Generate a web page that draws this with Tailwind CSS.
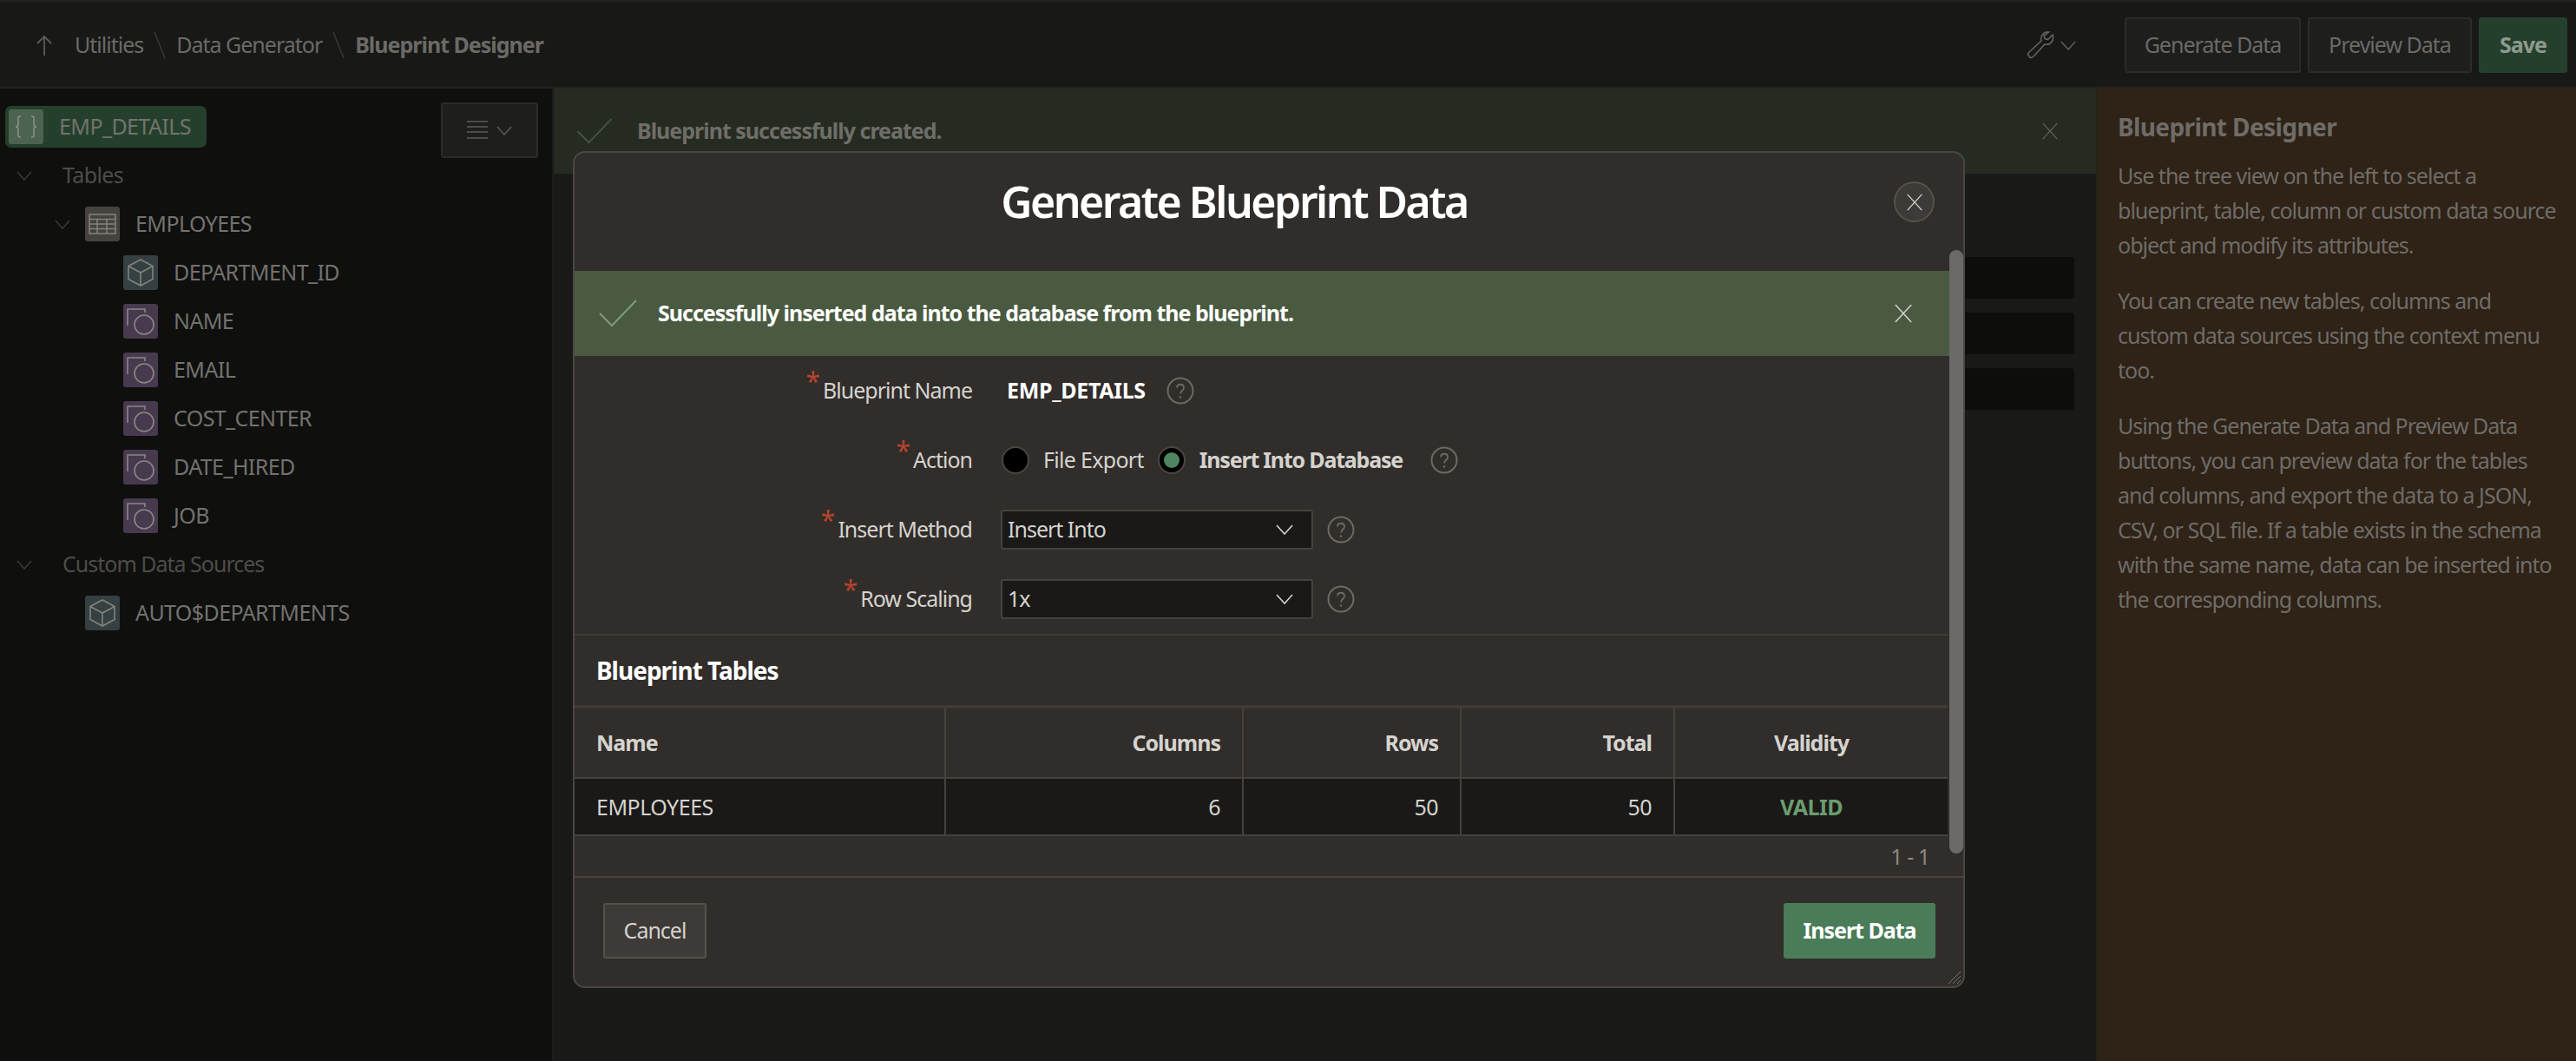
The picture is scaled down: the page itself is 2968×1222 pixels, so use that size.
<!DOCTYPE html>
<html lang="en">
<head>
<meta charset="UTF-8">
<title>Blueprint Designer</title>
<script src="https://cdn.jsdelivr.net/npm/@tailwindcss/browser@4"></script>
</head>
<body class="w-[2968px] h-[1222px] overflow-hidden bg-[#151514] font-['Noto_Sans',sans-serif] text-[25px] tracking-[-1px]">

<!-- shared icons -->
<svg class="hidden">
  <symbol id="chev" viewBox="0 0 20 12"><path d="M1 1l9 10 9-10" fill="none" stroke="currentColor" stroke-width="1.6"/></symbol>
  <symbol id="close" viewBox="0 0 24 24"><path d="M2 1l20 22M22 1L2 23" fill="none" stroke="currentColor" stroke-width="1.6"/></symbol>
  <symbol id="check" viewBox="0 0 44 32"><path d="M1 16l14 14L43 1" fill="none" stroke="currentColor" stroke-width="2"/></symbol>
  <symbol id="cube" viewBox="0 0 40 40"><path d="M20 5l14 7.500v15L20 35 6 27.500v-15zM6 12.500L20 20l14-7.500M20 20v15" fill="none" stroke="#83827d" stroke-width="1.6"/></symbol>
  <symbol id="shape" viewBox="0 0 40 40"><path d="M5 25V6h20v4" fill="none" stroke="#8a8884" stroke-width="1.6"/><circle cx="24" cy="24" r="11" fill="none" stroke="#8a8884" stroke-width="1.6"/></symbol>
  <symbol id="help" viewBox="0 0 32 32"><circle cx="16" cy="16" r="14.500" fill="none" stroke="#6d6a66" stroke-width="2"/><path d="M12 12.500c0-5 8-5 8 0 0 3.500-4 3.500-4 7" fill="none" stroke="#6d6a66" stroke-width="1.800"/><circle cx="16" cy="23.500" r="1.200" fill="#6d6a66"/></symbol>
</svg>

<!-- top bar -->
<header class="h-[102px] flex items-center bg-[#181817] border-t-2 border-b-2 border-[#222221] pt-[2px] pl-[42px] pr-[10px] text-[#6b6a66]">
  <svg class="w-[18px] h-[24px] mr-[26px] text-[#5c5b57]" viewBox="0 0 18 24"><path d="M9 24V2M1 10l8-8 8 8" fill="none" stroke="currentColor" stroke-width="1.800"/></svg>
  <nav class="flex items-center">
    <span>Utilities</span>
    <svg class="w-[14px] h-[32px] mx-[12px]" viewBox="0 0 14 32"><path d="M1 1l12 30" stroke="#3a3937" stroke-width="1.500"/></svg>
    <span>Data Generator</span>
    <svg class="w-[14px] h-[32px] mx-[12px]" viewBox="0 0 14 32"><path d="M1 1l12 30" stroke="#3a3937" stroke-width="1.500"/></svg>
    <span class="font-bold">Blueprint Designer</span>
  </nav>
  <div class="ml-auto flex items-center text-[#63625e]">
    <svg class="w-[32px] h-[32px]" viewBox="0 0 32 32"><path d="M30 4l-5.500 5.500-3.500-1-1-3.500L25.500 1C20 0 15.500 4.500 17 11L2.500 24.500c-2.500 3 2 7.500 5 5L21 15c6 1.500 11-3.500 9-11z" fill="none" stroke="currentColor" stroke-width="1.600"/></svg>
    <svg class="w-[18px] h-[11px] ml-[7px] mr-[56px]"><use href="#chev"/></svg>
  </div>
  <div class="flex gap-[8px]">
    <button class="h-[64px] w-[203px] rounded-[3px] border-2 border-[#2b2b2a] bg-[#1e1e1d]">Generate Data</button>
    <button class="h-[64px] w-[189px] rounded-[3px] border-2 border-[#2b2b2a] bg-[#1e1e1d]">Preview Data</button>
    <button class="h-[64px] w-[102px] rounded-[3px] bg-[#24402c] font-bold text-[#8d9a8e]">Save</button>
  </div>
</header>

<div class="relative flex h-[1120px]">
  <!-- tree -->
  <aside class="w-[638px] shrink-0 flex items-start pt-[16px] pl-[6px] bg-[#0f0f0e] border-r-2 border-[#1b1b1a] text-[#73726e]">
    <ul class="flex-1 tracking-[-0.6px]">
      <li class="h-[56px] flex items-center">
        <div class="h-[48px] w-[232px] rounded-[7px] bg-[#24402c] flex items-center pl-[4px]">
          <span class="w-[40px] h-[40px] rounded-[3px] bg-[#4c6350] flex items-center justify-center">
            <svg class="w-[28px] h-[26px]" viewBox="0 0 28 26"><path d="M8 1C4 1 5 3 5 6v4c0 2-1 3-3 3 2 0 3 1 3 3v4c0 3-1 5 3 5M20 1c4 0 3 2 3 5v4c0 2 1 3 3 3-2 0-3 1-3 3v4c0 3 1 5-3 5" fill="none" stroke="#8a948a" stroke-width="1.500"/></svg>
          </span>
          <span class="ml-[18px]">EMP_DETAILS</span>
        </div>
      </li>
      <li class="h-[56px] flex items-center pl-[13px] text-[#4d4c49]">
        <svg class="w-[18px] h-[11px] text-[#3c3b39]"><use href="#chev"/></svg>
        <span class="ml-[35px]">Tables</span>
      </li>
      <li class="h-[56px] flex items-center pl-[57px]">
        <svg class="w-[18px] h-[11px] text-[#3c3b39]"><use href="#chev"/></svg>
        <span class="ml-[17px] w-[40px] h-[40px] rounded-[3px] bg-[#45423f] flex items-center justify-center">
          <svg class="w-[32px] h-[24px]" viewBox="0 0 32 24"><path d="M1 1h30v22H1zM1 6.500h30M1 12h30M1 17.500h30M10 6.500V23M21 6.500V23" fill="none" stroke="#83827d" stroke-width="1.500"/></svg>
        </span>
        <span class="ml-[18px]">EMPLOYEES</span>
      </li>
      <li class="h-[56px] flex items-center pl-[136px]">
        <span class="w-[40px] h-[40px] rounded-[3px] bg-[#344042]"><svg class="w-[40px] h-[40px]"><use href="#cube"/></svg></span>
        <span class="ml-[18px]">DEPARTMENT_ID</span>
      </li>
      <li class="h-[56px] flex items-center pl-[136px]">
        <span class="w-[40px] h-[40px] rounded-[3px] bg-[#473a4f]"><svg class="w-[40px] h-[40px]"><use href="#shape"/></svg></span>
        <span class="ml-[18px]">NAME</span>
      </li>
      <li class="h-[56px] flex items-center pl-[136px]">
        <span class="w-[40px] h-[40px] rounded-[3px] bg-[#473a4f]"><svg class="w-[40px] h-[40px]"><use href="#shape"/></svg></span>
        <span class="ml-[18px]">EMAIL</span>
      </li>
      <li class="h-[56px] flex items-center pl-[136px]">
        <span class="w-[40px] h-[40px] rounded-[3px] bg-[#473a4f]"><svg class="w-[40px] h-[40px]"><use href="#shape"/></svg></span>
        <span class="ml-[18px]">COST_CENTER</span>
      </li>
      <li class="h-[56px] flex items-center pl-[136px]">
        <span class="w-[40px] h-[40px] rounded-[3px] bg-[#473a4f]"><svg class="w-[40px] h-[40px]"><use href="#shape"/></svg></span>
        <span class="ml-[18px]">DATE_HIRED</span>
      </li>
      <li class="h-[56px] flex items-center pl-[136px]">
        <span class="w-[40px] h-[40px] rounded-[3px] bg-[#473a4f]"><svg class="w-[40px] h-[40px]"><use href="#shape"/></svg></span>
        <span class="ml-[18px]">JOB</span>
      </li>
      <li class="h-[56px] flex items-center pl-[13px] text-[#4d4c49]">
        <svg class="w-[18px] h-[11px] text-[#3c3b39]"><use href="#chev"/></svg>
        <span class="ml-[35px] tracking-[-1px]">Custom Data Sources</span>
      </li>
      <li class="h-[56px] flex items-center pl-[92px]">
        <span class="w-[40px] h-[40px] rounded-[3px] bg-[#344042]"><svg class="w-[40px] h-[40px]"><use href="#cube"/></svg></span>
        <span class="ml-[18px]">AUTO$DEPARTMENTS</span>
      </li>
    </ul>
    <button class="mr-[16px] w-[112px] h-[64px] rounded-[3px] border-2 border-[#2b2b2a] bg-[#1e1e1d] flex items-center justify-center gap-[10px]">
      <svg class="w-[24px] h-[22px]" viewBox="0 0 24 22"><path d="M0 1h24M0 7h24M0 13h24M0 20h24" stroke="#5c5b57" stroke-width="1.600"/></svg>
      <svg class="w-[18px] h-[11px] text-[#5c5b57]"><use href="#chev"/></svg>
    </button>
  </aside>

  <!-- page behind the dialog -->
  <main class="flex-1 flex flex-col bg-[#191918]">
    <div class="h-[98px] flex items-center bg-[#252b20] pl-[26px] pr-[43px] text-[#6f6d69]">
      <svg class="w-[42px] h-[30px] text-[#46523f]"><use href="#check"/></svg>
      <span class="ml-[28px] font-bold">Blueprint successfully created.</span>
      <svg class="ml-auto w-[20px] h-[20px] text-[#5f625b]"><use href="#close"/></svg>
    </div>
    <div class="mt-[96px] ml-[22px] mr-[25px] flex flex-col gap-[16px]">
      <div class="h-[48px] rounded-[4px] bg-[#0d0d0c]"></div>
      <div class="h-[48px] rounded-[4px] bg-[#0d0d0c]"></div>
      <div class="h-[48px] rounded-[4px] bg-[#0d0d0c]"></div>
    </div>
  </main>

  <!-- help panel -->
  <aside class="w-[553px] shrink-0 bg-[#2f2216] border-l-2 border-[#262218] pl-[23px] pt-[24px] text-[#6e6c68] leading-[40px]">
    <h2 class="font-bold text-[28px] tracking-[-0.6px] mb-[16px]">Blueprint Designer</h2>
    <p class="mb-[24px]">Use the tree view on the left to select a<br>blueprint, table, column or custom data source<br>object and modify its attributes.</p>
    <p class="mb-[24px]">You can create new tables, columns and<br>custom data sources using the context menu<br>too.</p>
    <p>Using the Generate Data and Preview Data<br>buttons, you can preview data for the tables<br>and columns, and export the data to a JSON,<br>CSV, or SQL file. If a table exists in the schema<br>with the same name, data can be inserted into<br>the corresponding columns.</p>
  </aside>

  <!-- dialog -->
  <section class="absolute left-[660px] top-[72px] w-[1604px] h-[964px] rounded-[14px] border-2 border-[#4a4743] bg-[#312d2a] text-[#d5d3cf] overflow-hidden">
    <div class="relative h-[136px] flex items-center justify-center pr-[80px]">
      <h1 class="text-[50px] font-semibold text-white tracking-[-2.5px] -mt-[24px]">Generate Blueprint Data</h1>
      <button class="absolute right-[33px] top-[33px] w-[47px] h-[47px] rounded-full border-2 border-[#55514d] bg-[#3e3a37] flex items-center justify-center">
        <svg class="w-[20px] h-[20px] text-[#d5d3cf]"><use href="#close"/></svg>
      </button>
    </div>

    <div class="h-[98px] flex items-center bg-[#4a5a40] pl-[28px] pr-[58px] text-white font-bold">
      <svg class="w-[44px] h-[32px] text-[#7f9d78]"><use href="#check"/></svg>
      <span class="ml-[24px]">Successfully inserted data into the database from the blueprint.</span>
      <svg class="ml-auto w-[22px] h-[22px] text-[#d5d3cf]"><use href="#close"/></svg>
    </div>

    <div class="h-[320px]">
      <div class="h-[80px] flex items-center">
        <label class="w-[458px] flex items-center justify-end"><span class="text-[#b5452f] text-[30px] leading-none -mt-[22px] mr-[4px]">*</span>Blueprint Name</label>
        <span class="ml-[40px] font-bold text-white tracking-[-0.3px]">EMP_DETAILS</span>
        <svg class="ml-[24px] w-[32px] h-[32px]"><use href="#help"/></svg>
      </div>
      <div class="h-[80px] flex items-center">
        <label class="w-[458px] flex items-center justify-end"><span class="text-[#b5452f] text-[30px] leading-none -mt-[22px] mr-[4px]">*</span>Action</label>
        <span class="ml-[34px] w-[32px] h-[32px] rounded-full border-2 border-[#4a4743] bg-black"></span>
        <span class="ml-[16px] tracking-[-0.7px]">File Export</span>
        <span class="ml-[16px] w-[32px] h-[32px] rounded-full border-2 border-[#4a4743] bg-black flex items-center justify-center"><span class="w-[18px] h-[18px] rounded-full bg-[#4f8560]"></span></span>
        <span class="ml-[16px] font-bold tracking-[-1.2px]">Insert Into Database</span>
        <svg class="ml-[32px] w-[32px] h-[32px]"><use href="#help"/></svg>
      </div>
      <div class="h-[80px] flex items-center">
        <label class="w-[458px] flex items-center justify-end"><span class="text-[#b5452f] text-[30px] leading-none -mt-[22px] mr-[4px]">*</span>Insert Method</label>
        <div class="ml-[33px] w-[360px] h-[46px] rounded-[3px] border-2 border-[#45423e] bg-[#1a1917] flex items-center justify-between pl-[6px] pr-[21px]">
          <span>Insert Into</span>
          <svg class="w-[20px] h-[12px]"><use href="#chev"/></svg>
        </div>
        <svg class="ml-[16px] w-[32px] h-[32px]"><use href="#help"/></svg>
      </div>
      <div class="h-[80px] flex items-center">
        <label class="w-[458px] flex items-center justify-end"><span class="text-[#b5452f] text-[30px] leading-none -mt-[22px] mr-[4px]">*</span>Row Scaling</label>
        <div class="ml-[33px] w-[360px] h-[46px] rounded-[3px] border-2 border-[#45423e] bg-[#1a1917] flex items-center justify-between pl-[6px] pr-[21px]">
          <span>1x</span>
          <svg class="w-[20px] h-[12px]"><use href="#chev"/></svg>
        </div>
        <svg class="ml-[16px] w-[32px] h-[32px]"><use href="#help"/></svg>
      </div>
    </div>

    <div class="h-[82px] flex items-center border-t-2 border-[#3e3b37] pl-[25px] font-bold text-[28px] text-white">Blueprint Tables</div>

    <table class="table-fixed w-[1582px] border-collapse border-t-4 border-[#3e3b37]">
      <colgroup><col class="w-[427px]"><col class="w-[343px]"><col class="w-[251px]"><col class="w-[246px]"><col class="w-[315px]"></colgroup>
      <thead>
        <tr class="h-[82px] font-bold border-b-2 border-[#45423e]">
          <th class="text-left pl-[25px] font-bold border-r-2 border-[#45423e]">Name</th>
          <th class="text-right pr-[25px] font-bold border-r-2 border-[#45423e]">Columns</th>
          <th class="text-right pr-[25px] font-bold border-r-2 border-[#45423e]">Rows</th>
          <th class="text-right pr-[25px] font-bold border-r-2 border-[#45423e]">Total</th>
          <th class="text-center font-bold">Validity</th>
        </tr>
      </thead>
      <tbody>
        <tr class="h-[66px] bg-[#1a1917] border-b-2 border-[#45423e] tracking-[-0.5px]">
          <td class="pl-[25px] pt-[2px] border-r-2 border-[#45423e]">EMPLOYEES</td>
          <td class="text-right pr-[25px] pt-[2px] border-r-2 border-[#45423e]">6</td>
          <td class="text-right pr-[25px] pt-[2px] border-r-2 border-[#45423e]">50</td>
          <td class="text-right pr-[25px] pt-[2px] border-r-2 border-[#45423e]">50</td>
          <td class="text-center pt-[2px] font-bold text-[#6c9c70]">VALID</td>
        </tr>
      </tbody>
    </table>

    <div class="h-[46px] flex items-center justify-end pt-[2px] pr-[39px] text-[#8a8884]">1 - 1</div>

    <div class="h-[127px] flex items-start justify-between border-t-2 border-[#45423e] pt-[29px] pl-[33px] pr-[32px]">
      <button class="w-[119px] h-[64px] rounded-[3px] border-2 border-[#55514d] bg-[#3e3a37]">Cancel</button>
      <button class="w-[175px] h-[64px] rounded-[3px] bg-[#4a7c59] text-white font-bold">Insert Data</button>
    </div>

    <!-- overlay scrollbar and resize grip -->
    <div class="absolute right-0 top-[112px] w-[16px] h-[695px] rounded-full bg-[#6b6a66]"></div>
    <svg class="absolute right-[2px] bottom-[2px] w-[16px] h-[16px]" viewBox="0 0 16 16"><path d="M1 15L15 1M6 15l9-9M11 15l4-4" stroke="#77746f" stroke-width="1"/></svg>
  </section>
</div>
</body>
</html>
